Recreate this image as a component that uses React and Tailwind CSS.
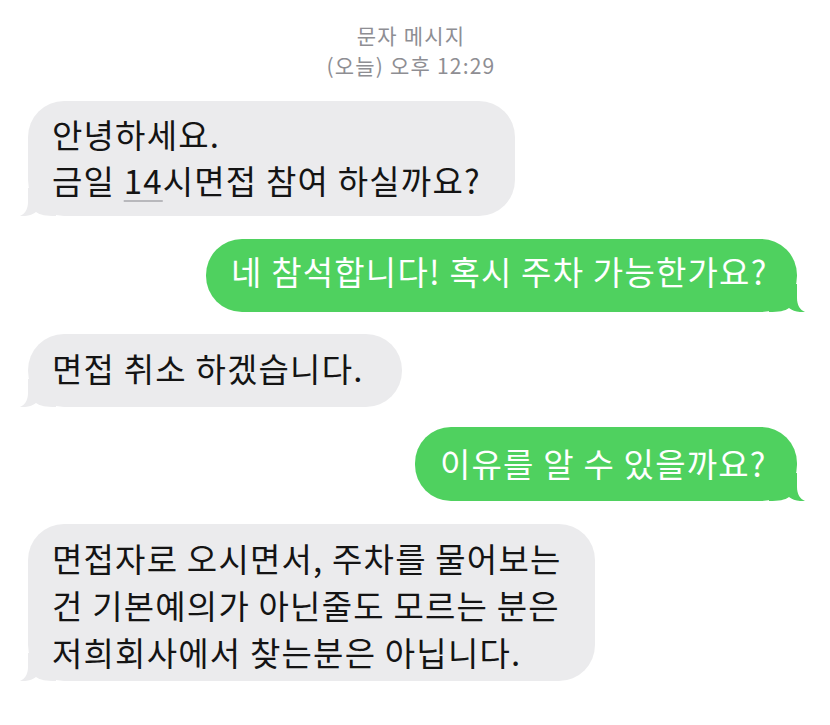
import React from 'react';

const font = { fontFamily: '"Noto Sans CJK KR", "Noto Sans", sans-serif' };

const Tail = ({ side, color }) => (
  <svg
    className={
      side === 'left'
        ? 'absolute -left-[8px] bottom-0 w-[36px] h-[28px]'
        : 'absolute -right-[8px] bottom-0 w-[36px] h-[28px] -scale-x-100'
    }
    viewBox="0 0 36 28"
  >
    <path
      d="M8 0 L8 14 C8 21 5 26 0 28 C7 28.5 12 27 16 24 C20 27 26 28 36 28 L36 0 Z"
      fill={color}
    />
  </svg>
);

const Received = ({ children, className }) => (
  <div className={`relative self-start ml-[28px] bg-[#ebebed] rounded-[36px] pl-[24px] text-[33px] tracking-[1.2px] text-[#141414] whitespace-nowrap ${className}`}>
    <Tail side="left" color="#ebebed" />
    <div className="relative">{children}</div>
  </div>
);

const Sent = ({ children, className }) => (
  <div className={`relative self-end mr-[33px] bg-[#4fd15f] rounded-[36px] pl-[25px] text-[33px] tracking-[1.2px] text-white whitespace-nowrap leading-[47px] ${className}`}>
    <Tail side="right" color="#4fd15f" />
    <div className="relative">{children}</div>
  </div>
);

export default function App() {
  return (
    <div className="w-[830px] h-[725px] bg-white overflow-hidden flex flex-col" style={font}>
      <div className="pt-[20px] pr-[8px] text-center text-[21px] tracking-[1.2px] leading-[30px] text-[#8e8e93]">
        <div>문자 메시지</div>
        <div>(오늘) 오후 12:29</div>
      </div>

      <Received className="mt-[21px] w-[487px] pt-[10px] pb-[13px] leading-[46px]">
        안녕하세요.
        <br />
        금일{' '}
        <span className="underline decoration-[#b8b8bc] decoration-2 underline-offset-[6px]">14</span>
        시면접 참여 하실까요?
      </Received>

      <Sent className="mt-[23px] w-[591px] pt-[9px] pb-[17px]">
        네 참석합니다! 혹시 주차 가능한가요?
      </Sent>

      <Received className="mt-[22px] w-[374px] pt-[11px] pb-[15px] leading-[47px]">
        면접 취소 하겠습니다.
      </Received>

      <Sent className="mt-[20px] w-[382px] pt-[13px] pb-[14px]">
        이유를 알 수 있을까요?
      </Sent>

      <Received className="mt-[23px] w-[567px] pt-[11px] pb-[5px] leading-[47px]">
        면접자로 오시면서, 주차를 물어보는
        <br />
        건 기본예의가 아닌줄도 모르는 분은
        <br />
        저희회사에서 찾는분은 아닙니다.
      </Received>
    </div>
  );
}
